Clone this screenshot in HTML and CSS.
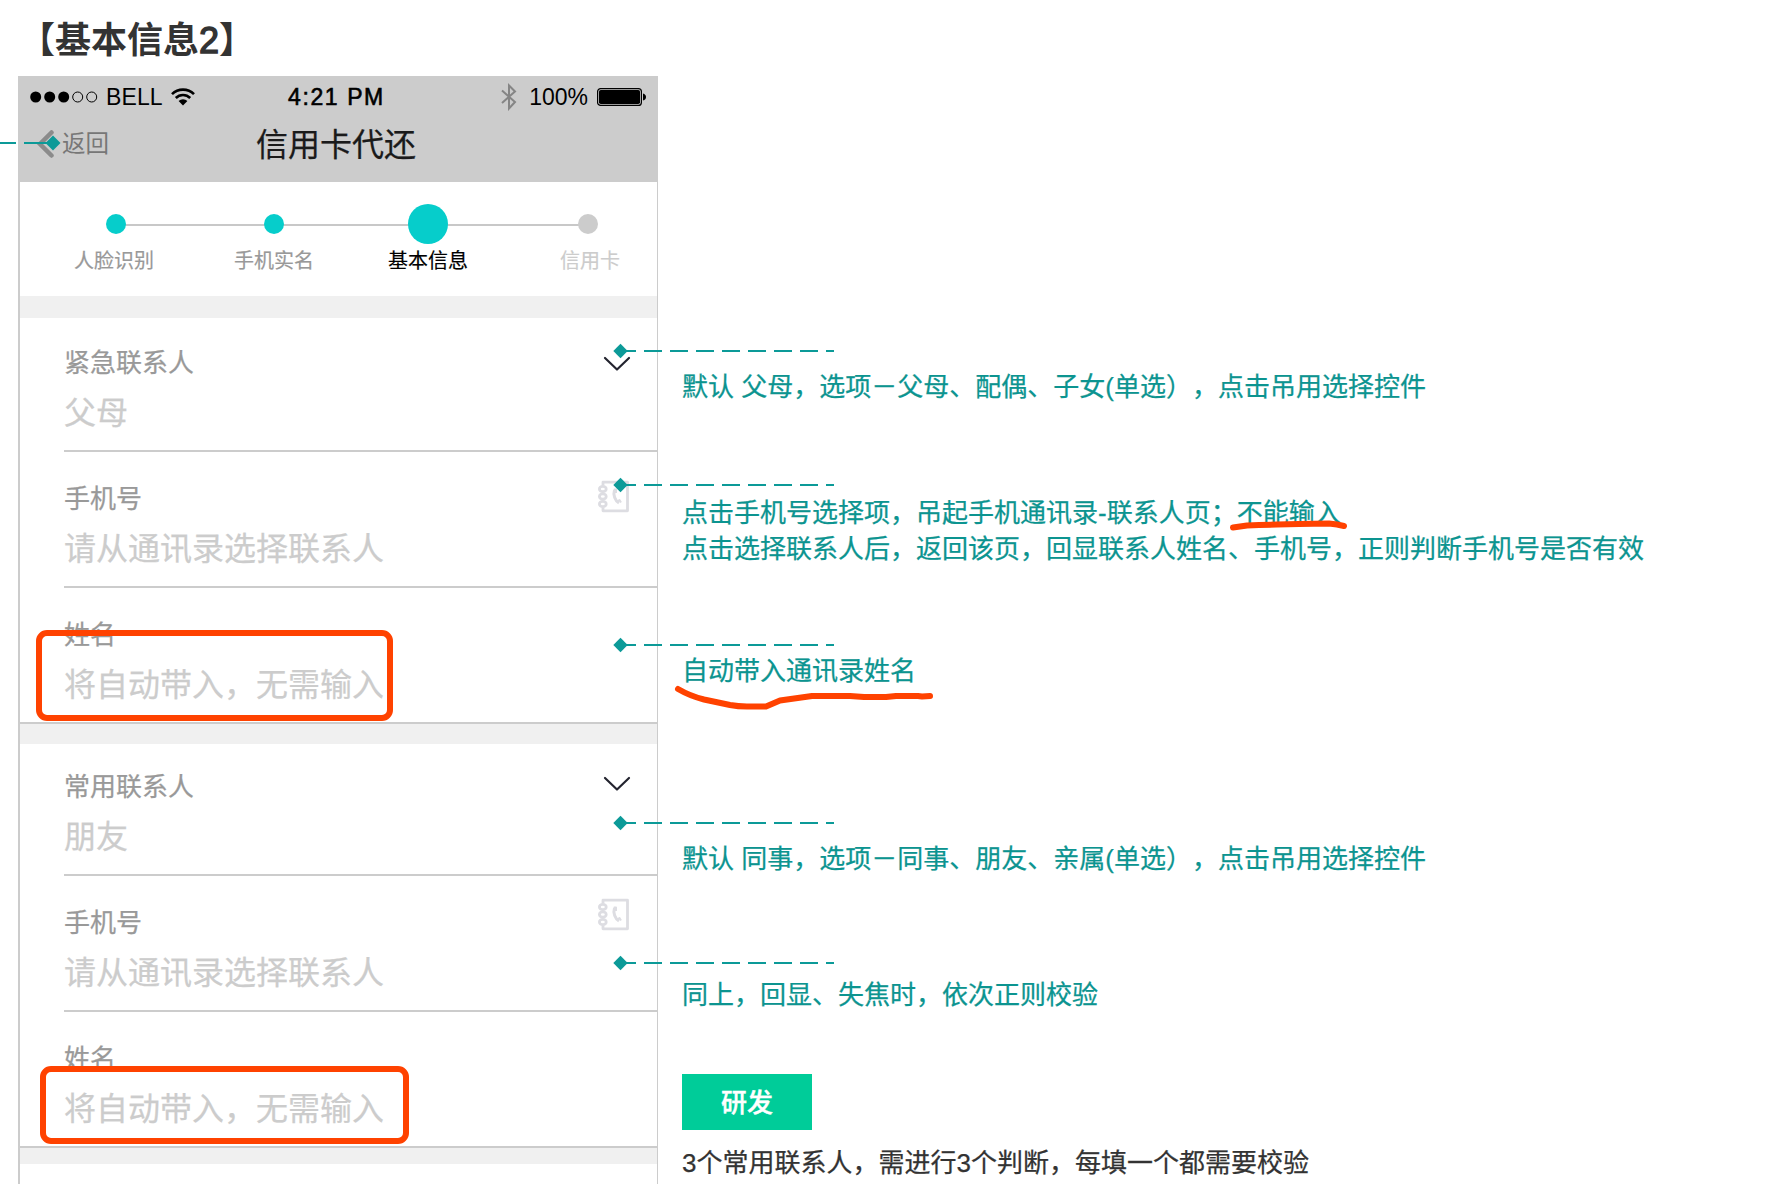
FILE: index.html
```html
<!DOCTYPE html>
<html lang="zh-CN">
<head>
<meta charset="utf-8">
<title>基本信息2</title>
<link rel="stylesheet" href="styles.css">
</head>
<body>
<svg class="defs" width="0" height="0" aria-hidden="true">
  <symbol id="chevron" viewBox="0 0 28 16"><path d="M2 2 14 13.5 26 2" fill="none" stroke="#23242f" stroke-width="2.2" stroke-linecap="round" stroke-linejoin="round"/></symbol>
  <symbol id="contacts" viewBox="0 0 32 34">
    <g fill="none" stroke="#dddde2" stroke-width="2.8" stroke-linejoin="round">
      <path d="M5 5.5V2.2h24.500v28.600H5v-3.300"/>
      <ellipse cx="4.800" cy="9" rx="3.400" ry="2.700"/><ellipse cx="4.800" cy="16.500" rx="3.400" ry="2.700"/><ellipse cx="4.800" cy="24" rx="3.400" ry="2.700"/>
      <path d="M16.500 10c-1.600 5 .5 10.500 4.500 13" stroke-width="3"/>
      <path d="M15.800 9.500h2.200v3.500M19 21.500l2.500-1.500 1.500 2.500" stroke-width="2"/>
    </g>
  </symbol>
  <symbol id="pointer" viewBox="0 0 224 16">
    <path d="M6 8H222" stroke="#0c9a98" stroke-width="2" stroke-dasharray="18 8"/>
    <path d="M8.500 .8 15.700 8 8.500 15.200 1.300 8Z" fill="#0c9a98"/>
  </symbol>
</svg>

<div class="page">
  <h1 class="page-title">【基本信息<span>2</span>】</h1>
  <main class="board">
    <section class="phone">
      <header class="phone-header">
        <div class="status-bar">
          <div class="carrier">
            <svg width="68" height="12" viewBox="0 0 68 12"><g fill="#000"><circle cx="5.700" cy="6" r="5.500"/><circle cx="19.700" cy="6" r="5.500"/><circle cx="33.700" cy="6" r="5.500"/></g><g fill="none" stroke="#000"><circle cx="47.700" cy="6" r="5"/><circle cx="61.700" cy="6" r="5"/></g></svg>
            <span>BELL</span>
            <svg class="wifi" width="24" height="18" viewBox="0 0 24 18"><g fill="none" stroke="#000" stroke-width="2.600"><path d="M1 6.200a15.500 15.500 0 0 1 22 0"/><path d="M4.800 10a10.200 10.200 0 0 1 14.400 0"/></g><path d="M12 17.500 7.600 13a6.200 6.200 0 0 1 8.800 0Z"/></svg>
          </div>
          <div class="clock">4:21 PM</div>
          <div class="power">
            <svg width="16" height="28" viewBox="0 0 16 28"><path d="M1 7.500 14 19 8 25.500V2.500L14 8.500 1 20" fill="none" stroke="#858585" stroke-width="2"/></svg>
            <span>100%</span>
            <svg width="50" height="18" viewBox="0 0 50 18"><rect x=".6" y=".6" width="43.800" height="16.800" rx="3" fill="none" stroke="#000" stroke-width="1.200"/><rect x="2" y="2" width="41" height="14" rx="1.800"/><path d="M46 5.500q3 1 3 3.500t-3 3.500Z"/></svg>
          </div>
        </div>
        <div class="nav-bar">
          <div class="back">
            <svg width="18" height="30" viewBox="0 0 18 30"><path d="M15.500 3.500 4 15 15.500 26.500" fill="none" stroke="#8b8b8b" stroke-width="4.500" stroke-linecap="round"/></svg>
            <span>返回</span>
          </div>
          <div class="nav-title">信用卡代还</div>
        </div>
      </header>

      <div class="steps">
        <div class="step done"><i class="dot"></i><span>人脸识别</span></div>
        <div class="step"><i class="dot"></i><span>手机实名</span></div>
        <div class="step current"><i class="dot"></i><span>基本信息</span></div>
        <div class="step pending"><i class="dot"></i><span>信用卡</span></div>
      </div>

      <div class="group first">
        <div class="field">
          <div class="field-text"><label>紧急联系人</label><p>父母</p></div>
          <svg class="chevron"><use href="#chevron"/></svg>
        </div>
        <div class="field">
          <div class="field-text"><label>手机号</label><p>请从通讯录选择联系人</p></div>
          <svg class="contacts"><use href="#contacts"/></svg>
        </div>
        <div class="field">
          <div class="field-text"><label>姓名</label><p>将自动带入，无需输入</p></div>
        </div>
      </div>
      <div class="group second">
        <div class="field">
          <div class="field-text"><label>常用联系人</label><p>朋友</p></div>
          <svg class="chevron"><use href="#chevron"/></svg>
        </div>
        <div class="field">
          <div class="field-text"><label>手机号</label><p>请从通讯录选择联系人</p></div>
          <svg class="contacts"><use href="#contacts"/></svg>
        </div>
        <div class="field">
          <div class="field-text"><label>姓名</label><p>将自动带入，无需输入</p></div>
        </div>
      </div>
      <div class="band"></div>
    </section>

    <aside class="notes">
      <p class="note relation">默认 父母，选项－父母、配偶、子女(单选），点击吊用选择控件</p>
      <p class="note phone-no">点击手机号选择项，吊起手机通讯录-联系人页；不能输入<br>点击选择联系人后，返回该页，回显联系人姓名、手机号，正则判断手机号是否有效</p>
      <p class="note name">自动带入通讯录姓名</p>
      <p class="note frequent">默认 同事，选项－同事、朋友、亲属(单选），点击吊用选择控件</p>
      <p class="note same">同上，回显、失焦时，依次正则校验</p>
      <div class="tag">研发</div>
      <p class="note dev">3个常用联系人，需进行3个判断，每填一个都需要校验</p>
    </aside>
  </main>

  <!-- callout pointers and hand-drawn marks over the mockup -->
  <svg class="pin pin-back" viewBox="0 0 64 16"><path d="M0 8H16M24 8H50" stroke="#0c9a98" stroke-width="2"/><path d="M53 .5 60.500 8 53 15.500 45.500 8Z" fill="#0c9a98"/></svg>
  <svg class="pin pin-1"><use href="#pointer"/></svg>
  <svg class="pin pin-2"><use href="#pointer"/></svg>
  <svg class="pin pin-3"><use href="#pointer"/></svg>
  <svg class="pin pin-4"><use href="#pointer"/></svg>
  <svg class="pin pin-5"><use href="#pointer"/></svg>
  <div class="mark mark-box-1"></div>
  <div class="mark mark-box-2"></div>
  <svg class="stroke stroke-1" viewBox="0 0 120 14"><path d="M4 8.500 18 6.500 30 6 48 5.500 70 5 100 4.500 108 5.500 115 7" /></svg>
  <svg class="stroke stroke-2" viewBox="0 0 260 28"><path d="M4 5Q16 12 30 15.500L56 21Q64 22.500 73 22.500H92L106 16.500 138 12H176L190 13H212L222 12H244L248 12.500 256 12"/></svg>
</div>
</body>
</html>
```

FILE: styles.css
```css
* { box-sizing: border-box; }

body {
  margin: 0;
  background: #fff;
  color: #333;
  font-family: "Liberation Sans", "Noto Sans CJK SC", sans-serif;
  text-spacing-trim: space-all;
}

h1, p { margin: 0; font-weight: 400; }
svg { display: block; flex: none; }
.defs { position: absolute; }

.page {
  position: relative;
  width: 1774px;
  height: 1184px;
  overflow: hidden;
}

.page-title {
  height: 76px;
  padding: 15px 0 0 19px;
  font-size: 36px;
  line-height: 52px;
  font-weight: 700;
}

.page-title span { font-weight: 400; -webkit-text-stroke: 1.4px #333; }

.board {
  display: flex;
  gap: 24px;
  height: 1108px;
  padding-left: 18px;
}

/* phone mockup */
.phone {
  width: 640px;
  border: solid #ccc;
  border-width: 0 1px 0 2px;
}

.phone-header {
  height: 106px;
  background: #ccc;
  color: #000;
}

.status-bar {
  display: grid;
  grid-template-columns: 258px 1fr auto;
  align-items: center;
  height: 42px;
  padding: 0 10px;
  font-size: 23px;
  line-height: 42px;
}

.carrier, .power { display: flex; align-items: center; }
.carrier span { margin-left: 8px; letter-spacing: .1px; }
.carrier .wifi { margin-left: 8px; }
.clock { letter-spacing: 1.6px; -webkit-text-stroke: .6px #000; }
.power span { margin: 0 9px 0 12px; }

.nav-bar {
  display: grid;
  grid-template-columns: 236px 1fr;
  align-items: center;
  height: 52px;
}

.back {
  display: flex;
  align-items: center;
  gap: 8px;
  padding-left: 16px;
  color: #777;
  font-size: 23.5px;
  line-height: 32px;
}

.nav-title {
  padding-top: 2px;
  color: #1a1a1a;
  font-size: 32px;
  line-height: 50px;
  -webkit-text-stroke: .25px;
}

.steps {
  display: grid;
  grid-template-columns: 174px 142px 166px 1fr;
  height: 114px;
  padding-left: 9px;
  background: linear-gradient(#c8c8c8, #c8c8c8) 96px 42px / 472px 2px no-repeat;
}

.step {
  display: flex;
  flex-direction: column;
  align-items: center;
  color: #999;
  font-size: 20px;
  line-height: 30px;
  -webkit-text-stroke: .2px;
}

.step .dot {
  width: 20px;
  height: 20px;
  margin: 32px 0 12px;
  border-radius: 50%;
  background: #06cdcb;
}

.step.done span { margin-right: 4px; }
.step.current { color: #000; }
.step.current .dot { width: 40px; height: 40px; margin: 22px 0 2px; }
.step.pending { width: 154px; color: #ccc; }
.step.pending .dot { background: #ccc; }
.step.pending span { margin-left: 4px; }

.group {
  padding-left: 44px;
  border-top: 22px solid #f0f0f0;
  border-bottom: 2px solid #ccc;
}

.group.second { border-top-width: 20px; }

.field {
  display: flex;
  justify-content: space-between;
  height: 136px;
  padding: 25px 26px 0 0;
  border-bottom: 2px solid #ccc;
}

.field:last-child { height: 134px; border-bottom: 0; }
.first .field:first-child { height: 134px; padding-top: 23px; }
.second .field:first-child { height: 132px; padding-top: 21px; }

.field label {
  display: block;
  color: #999;
  font-size: 26px;
  line-height: 44px;
  -webkit-text-stroke: .25px;
}

.field p {
  margin-top: 4px;
  color: #ccc;
  font-size: 32px;
  line-height: 48px;
  -webkit-text-stroke: .25px;
}

.chevron { width: 28px; height: 16px; margin-top: 11px; }
.first .chevron { margin-top: 15px; }
.contacts { width: 32px; height: 34px; margin: 3px 1px 0 0; }
.second .contacts { margin-top: -3px; }
.band { height: 16px; background: #f0f0f0; }

/* written notes */
.notes { flex: 1; color: #0c9490; }
.note { font-size: 26px; line-height: 36px; white-space: nowrap; -webkit-text-stroke: .25px; }
.relation { margin-top: 293px; }
.phone-no { margin-top: 90px; }
.name { margin-top: 86px; }
.frequent { margin-top: 152px; }
.same { margin-top: 100px; }

.tag {
  width: 130px;
  height: 56px;
  margin-top: 61px;
  background: #0c9;
  color: #fff;
  font-size: 26px;
  font-weight: 500;
  line-height: 58px;
  text-align: center;
  -webkit-text-stroke: .4px;
}

.dev { margin-top: 15px; color: #333; }

/* overlay */
.pin { position: absolute; left: 612px; width: 224px; height: 16px; }
.pin-back { left: 0; top: 135px; width: 64px; }
.pin-1 { top: 343px; }
.pin-2 { top: 477px; }
.pin-3 { top: 637px; }
.pin-4 { top: 815px; }
.pin-5 { top: 955px; }

.mark { position: absolute; border: 6px solid #ff4200; border-radius: 11px; }
.mark-box-1 { left: 36px; top: 630px; width: 357px; height: 91px; }
.mark-box-2 { left: 40px; top: 1066px; width: 369px; height: 78px; }

.stroke {
  position: absolute;
  overflow: visible;
  fill: none;
  stroke: #ff4200;
  stroke-width: 6px;
  stroke-linecap: round;
  stroke-linejoin: round;
}

.stroke-1 { left: 1229px; top: 519px; width: 120px; height: 14px; }
.stroke-2 { left: 674px; top: 684px; width: 260px; height: 28px; }
```
